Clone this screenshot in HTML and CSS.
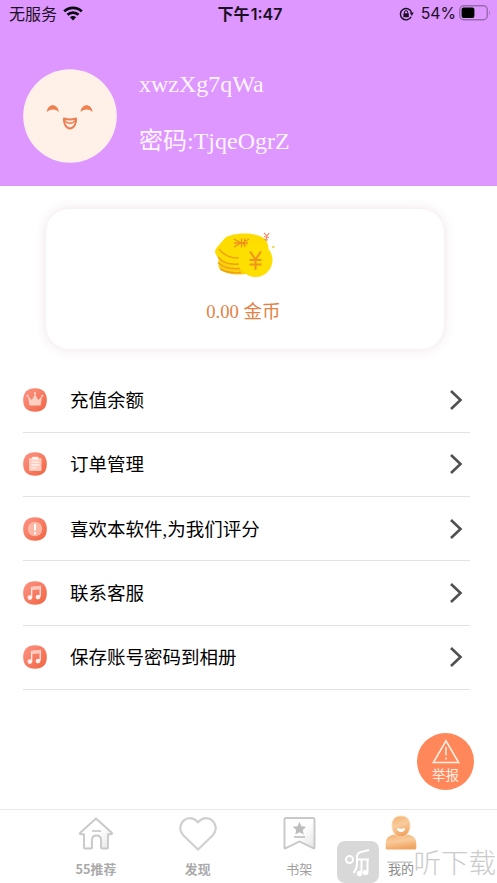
FILE: index.html
```html
<!DOCTYPE html>
<html lang="zh-CN">
<head>
<meta charset="utf-8">
<title>我的</title>
<link rel="stylesheet" href="styles.css">
</head>
<body>
<svg width="0" height="0" class="defs">
  <defs>
    <linearGradient id="coral" x1="0" y1="0" x2="1" y2="1"><stop offset="0.15" stop-color="#fa8d7c"/><stop offset="1" stop-color="#f26440"/></linearGradient>
    <linearGradient id="gold" x1="0" y1="0" x2="0.3" y2="1"><stop offset="0" stop-color="#f3b070"/><stop offset="0.5" stop-color="#f9cb9b"/><stop offset="1" stop-color="#f0a562"/></linearGradient>
    <linearGradient id="fade" x1="0" y1="0" x2="1" y2="1"><stop offset="0.5" stop-color="#fff"/><stop offset="1" stop-color="#e4e4e4"/></linearGradient>
    <symbol id="chevron" viewBox="0 0 14 22"><path d="M2 2l9.500 9L2 20" fill="none" stroke="#505052" stroke-width="2.600"/></symbol>
    <symbol id="badge" viewBox="0 0 24 24"><path d="M12 .2C19.800.2 23.800 4.200 23.800 12S19.800 23.800 12 23.800.2 19.800.2 12 4.200.2 12 .2Z" fill="url(#coral)"/></symbol>
    <symbol id="music" viewBox="0 0 24 24"><use href="#badge"/><path d="M8.600 16.500V6.700l8.600-1.100v10" fill="none" stroke="#ffe5dd" stroke-width="1.400"/><path d="M8.600 6.100l8.600-1v3.200l-8.600 1z" fill="#ffc9bd"/><circle cx="6.900" cy="16.600" r="2.400" fill="#fff1ec"/><circle cx="15" cy="16.100" r="2.400" fill="#fff1ec"/></symbol>
  </defs>
</svg>
<div class="screen">
  <header class="header">
    <div class="status">
      <div class="status-left"><span>无服务</span>
        <svg class="wifi" viewBox="0 0 20 15"><path d="M1.200 5.400a12.600 12.600 0 0 1 17.600 0M4.500 8.800a7.800 7.800 0 0 1 11 0" fill="none" stroke="#0b0710" stroke-width="2.700"/><path d="M6.900 11.300a4.400 4.400 0 0 1 6.200 0L10 14.500z" fill="#0b0710"/></svg>
      </div>
      <div class="clock">下午 1:47</div>
      <div class="status-right">
        <svg class="lock" viewBox="0 0 15 14"><path d="M12.200 9.800A5.700 5.700 0 1 1 12.600 5.600" fill="none" stroke="#1b0f22" stroke-width="1.400"/><path d="M10.800 5.600h4L12.800 9z" fill="#1b0f22"/><rect x="4.400" y="6.200" width="5.400" height="4" rx=".5" fill="#1b0f22"/><path d="M5.500 6.500V5.200a1.600 1.600 0 0 1 3.200 0v1.300" fill="none" stroke="#1b0f22"/></svg>
        <span class="percent">54%</span>
        <svg class="battery" viewBox="0 0 32 16"><rect x=".8" y=".8" width="27.500" height="14" rx="4" fill="none" stroke="#9869ae" stroke-width="1.400"/><rect x="2.600" y="2.600" width="12.800" height="10.400" rx="2" fill="#000"/><path d="M30 5.300q1.700 2.500 0 5z" fill="#9869ae"/></svg>
      </div>
    </div>
    <div class="profile">
      <svg class="avatar" viewBox="0 0 94 94"><circle cx="47" cy="47" r="46.800" fill="#fff0e8"/><path d="M23.800 43C24.500 34 35 34 35.800 43 32.500 39.700 27.500 39.700 23.800 43ZM57.600 43C58.300 34 68.800 34 69.600 43 66.300 39.700 61.300 39.700 57.600 43Z" fill="#f08050"/><path d="M41 49.500q6 2 12 0c.7 5.500-2.600 10-6 10s-6.700-4.500-6-10Z" fill="#fff0e8" stroke="#ee7d50" stroke-width="2" stroke-linejoin="round"/><path d="M42 51.500c2 3.600 8 3.600 10 0" fill="none" stroke="#ee7d50" stroke-width="1.500"/></svg>
      <div class="account"><div>xwzXg7qWa</div><div>密码:TjqeOgrZ</div></div>
    </div>
  </header>
  <main class="main">
    <section class="card">
      <svg class="coins" viewBox="0 0 62 46">
        <path d="M4.500 23v12c4 8 22 9 30 6V18Z" fill="#fbcf0b"/>
        <path d="M11 6C20 0 44 0 51 7c3 4 4 8 3 12L30 36C18 36 3 29 1 20c0-3 2-5 4-7Z" fill="#fddd00"/>
        <path d="M5 17c5 7 14 9.500 20 9M4 25c5 6 13 8 21 7M4 30.500c6 6 13 7 22 6M6 37c7 3.500 14 4.500 21 3.500" fill="none" stroke="#efa017" stroke-width="1.400"/>
        <path d="M20 7l7 4-7 4M20 11H34M27.500 6.500v9M30.500 6.500v9M35 7l-7 4 6 4" fill="none" stroke="#ef8f1c" stroke-width="1.300"/>
        <circle cx="41.500" cy="28" r="17" fill="#fddf00"/>
        <path d="M36 19.500l5.500 8 5.500-8M41.500 27.500V38M35.500 28h12M35.500 32.500h12" fill="none" stroke="#f29220" stroke-width="2"/>
        <path d="M50 1l3 3 2-3M53 4l-1 5M50 4.500l5 1M50 7l4 1" fill="none" stroke="#ef9068" stroke-width="1.200"/><circle cx="59.300" cy="15" r="1.200" fill="#f4cf50"/>
      </svg>
      <div class="balance">0.00 金币</div>
    </section>
    <nav class="list">
      <div class="row"><svg class="icon" viewBox="0 0 24 24"><use href="#badge"/><path d="M5 8l3.800 4L12 6l3.200 6L19 8l-1.400 9.500H6.400Z" fill="#ffd0c2"/><g fill="#ffe5dc"><circle cx="4.600" cy="7.800" r="1"/><circle cx="12" cy="5.300" r="1.100"/><circle cx="19.400" cy="7.800" r="1"/></g></svg><span>充值余额</span><svg class="chevron"><use href="#chevron"/></svg></div>
      <div class="row"><svg class="icon" viewBox="0 0 24 24"><use href="#badge"/><rect x="6" y="6" width="12.500" height="13" rx="1" fill="#ffcbbd"/><rect x="9" y="4.800" width="6.500" height="3" rx="1" fill="#fff1ea"/><path d="M8.300 10.200h8M8.300 13h8M8.300 15.800h5" stroke="#fff3ee" stroke-width="1.300"/></svg><span>订单管理</span><svg class="chevron"><use href="#chevron"/></svg></div>
      <div class="row"><svg class="icon" viewBox="0 0 24 24"><use href="#badge"/><circle cx="12" cy="12" r="7.300" fill="#ffb7a5"/><path d="M12 7v6.500M12 15.200v2" stroke="#fff" stroke-width="2"/></svg><span>喜欢本软件,为我们评分</span><svg class="chevron"><use href="#chevron"/></svg></div>
      <div class="row"><svg class="icon"><use href="#music"/></svg><span>联系客服</span><svg class="chevron"><use href="#chevron"/></svg></div>
      <div class="row"><svg class="icon"><use href="#music"/></svg><span>保存账号密码到相册</span><svg class="chevron"><use href="#chevron"/></svg></div>
    </nav>
  </main>
  <div class="report"><svg viewBox="0 0 28 25"><path d="M14 1.800L26.700 23.500H1.300Z" fill="none" stroke="#fff0e5" stroke-width="1.600"/><path d="M14 8v8.500M14 18.500v2" stroke="#fff0e5" stroke-width="1.500"/></svg><span>举报</span></div>
  <footer class="tabs">
    <div class="tab"><svg viewBox="0 0 36 34"><path d="M18 1.500L34 16c.6.700.2 1.200-.6 1.200H30v13.300q0 1-1 1h-5q-1 0-1-1V23q0-4.500-4.500-4.500T14 23v7.500q0 1-1 1H7q-1 0-1-1V17.200H2.600c-.8 0-1.200-.5-.6-1.200Z" fill="url(#fade)" stroke="#c9c9c9" stroke-width="1.900" stroke-linejoin="round"/><path d="M14 14h9" stroke="#c9c9c9" stroke-width="1.700"/></svg><span class="strong">55推荐</span></div>
    <div class="tab"><svg class="heart" viewBox="0 0 38 34"><path d="M19 32.500L4 18C-4.500 8.500 8.500-6 19 5.200 29.500-6 42.500 8.500 34 18Z" fill="none" stroke="#d0d0d0" stroke-width="2.200"/></svg><span class="strong">发现</span></div>
    <div class="tab"><svg viewBox="0 0 36 34"><path d="M5 1h27q1.500 0 1.500 1.500v28q0 1.500-1.300.7L18.500 24.500 4.800 31.200q-1.300.8-1.300-.7V2.500Q3.500 1 5 1Z" fill="url(#fade)" stroke="#c8c8c8" stroke-width="1.900"/><path d="M18.500 5l2 4.200 4.700.6-3.400 3.200.9 4.600-4.200-2.300-4.200 2.300.9-4.600-3.400-3.200 4.700-.6Z" fill="#bdbdbd"/><path d="M13 20h11" stroke="#bdbdbd" stroke-width="1.600"/></svg><span>书架</span></div>
    <div class="tab"><svg class="person" viewBox="0 0 32 36"><path d="M.7 33v-4.500Q.7 21.500 8 19.800h16q7.300 1.700 7.300 8.700V33q0 1.500-1.500 1.500H2.200Q.7 34.500.7 33Z" fill="url(#gold)"/><path d="M16 1c6 0 9 4 9 9.500S22 22 16 22 7 16 7 10.500 10 1 16 1Z" fill="url(#gold)" stroke="#fbd9b3" stroke-width=".8"/><path d="M11.800 13q4.200 1.400 8.400 0c0 5.400-8.400 5.400-8.400 0Z" fill="#fff"/></svg><span class="active">我的</span></div>
  </footer>
  <div class="watermark"><svg viewBox="0 0 42 42"><rect width="42" height="42" rx="8" fill="#d4d4d4"/><g fill="none" stroke="#fff" stroke-width="2"><circle cx="12.500" cy="18.500" r="3.500"/><path d="M32 9l-8 2q-4 .8-4 5v7q0 5-3.500 9M20 18.500h12M24.500 18.500V31M30.500 18.500v12"/></g><circle cx="28.600" cy="31.500" r="2.800" fill="#fff"/><circle cx="22.600" cy="32.500" r="2.800" fill="#fff"/></svg><span>一听下载</span></div>
</div>
</body>
</html>
```
FILE: styles.css
```css
* { box-sizing: border-box; }
body { margin: 0; background: #fff; color: #000; font-family: "Liberation Serif", "Noto Sans CJK SC", serif; }
svg { display: block; flex: none; }
.defs { position: absolute; }
.screen { position: relative; width: 497px; height: 883px; display: flex; flex-direction: column; overflow: hidden; }
.header { height: 186px; flex: none; background: #dd97ff; }
.status { height: 28px; display: grid; grid-template-columns: 1fr auto 1fr; align-items: center; padding: 0 6px 0 9px; font: 16px/28px Inter, "Noto Sans CJK SC", sans-serif; color: #1b0f22; }
.status-left, .status-right { display: flex; align-items: center; }
.status-left { gap: 6px; }
.wifi { width: 20px; height: 15px; margin-top: -2px; }
.clock { font-weight: 600; font-size: 16px; word-spacing: -3px; }
.status-right { justify-content: flex-end; }
.percent { font-size: 15.800px; }
.lock { width: 15px; height: 14px; margin-right: 7px; }
.battery { width: 32px; height: 16px; margin: -2px 0 0 3px; }
.profile { display: flex; padding: 41px 0 0 23px; }
.avatar { width: 94px; height: 94px; }
.account { margin-left: 22px; font-size: 24px; line-height: 57px; color: #fff5ff; margin-top: -13px; white-space: nowrap; }
.main { flex: 1; }
.card { width: 398px; height: 140px; margin: 23px 0 0 46px; border-radius: 23px; box-shadow: 0 0 12px rgba(120, 35, 70, .13); display: flex; flex-direction: column; align-items: center; padding-top: 23px; }
.coins { width: 62px; height: 46px; }
.balance { margin: 20px 3px 0 0; font-size: 18.600px; line-height: 28px; color: #e28345; }
.list { margin: 19.500px 27px 0 23px; }
.row { height: 64.300px; display: flex; align-items: center; border-bottom: 1.300px solid #e2e2e2; font-size: 18.500px; }
.row span { margin-top: -2px; }
.icon { width: 24px; height: 24px; margin-right: 23px; }
.chevron { width: 14px; height: 22px; margin: 0 7px 0 auto; }
.report { position: absolute; left: 417px; top: 733px; width: 57px; height: 57px; border-radius: 50%; background: #ff8759; color: #fff0e5; display: flex; flex-direction: column; align-items: center; padding-top: 6px; font: 13.500px/19px "Noto Sans CJK SC", sans-serif; }
.report svg { width: 28px; height: 25px; margin-bottom: 1px; }
.tabs { height: 74px; flex: none; display: flex; border-top: 1px solid #e9e9e9; padding: 0 45px; font: 13px/18px "Noto Sans CJK SC", sans-serif; color: #a0a0a0; }
.tab { flex: 1; display: flex; flex-direction: column; align-items: center; padding-top: 7px; }
.tab svg { width: 36px; height: 34px; margin-bottom: 9px; }
.tab .heart { width: 38px; }
.tab .person { width: 32px; height: 36px; margin: -2px 0 9px; }
.strong { font-weight: 700; font-size: 12.800px; color: #aaa; }
.active { color: #8c8c8c; }
.watermark { position: absolute; left: 337px; top: 841px; display: flex; gap: 7px; align-items: center; font: 300 27.500px/42px "Noto Sans CJK SC", sans-serif; color: #c6c6c6; white-space: nowrap; opacity: .9; }
.watermark span { margin-top: -2px; }
.watermark svg { width: 42px; height: 42px; }
```
